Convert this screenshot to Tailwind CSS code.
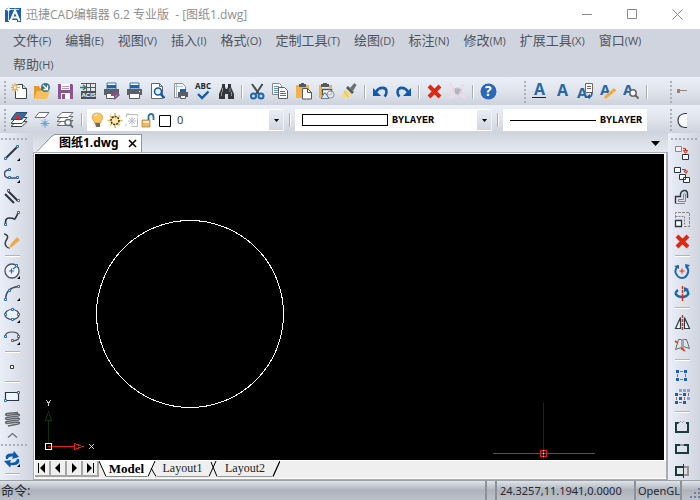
<!DOCTYPE html>
<html lang="zh-CN">
  <head>
    <meta charset="UTF-8" />
    <meta name="viewport" content="width=device-width, initial-scale=1.0" />
    <title>迅捷CAD编辑器</title>
    <script src="https://cdn.jsdelivr.net/npm/@tailwindcss/browser@4"></script>
  </head>
  <body class="flex h-screen flex-col overflow-hidden bg-[#d0d4de] font-['Open_Sans','Noto_Sans_CJK_SC',sans-serif]">
    <!-- Title bar -->
    <header class="flex h-[29px] shrink-0 items-center bg-white pl-[5px] text-[#8f8f8f]">
      <svg class="mr-1 size-[17px]" viewBox="0 0 17 17">
        <path d="M2 2h14v12H0V4z" fill="#1f5fb0" />
        <path d="M0 14h4v2H0zM12 14h4v2h-4z" fill="#1f5fb0" />
        <path d="M5.500 15 10 4.500 14.500 15M7 11.500h6" fill="none" stroke="#fff" stroke-width="2" />
        <path d="M3.500 0v15M0 3.500h14" stroke="#cfe2f7" />
        <path d="M3.500 1l1 1.500 1.500 1-1.500 1-1 1.500-1-1.500-1.500-1 1.500-1z" fill="#fff" />
      </svg>
      <h1 class="grow text-[12px] whitespace-pre">迅捷CAD编辑器 6.2 专业版  - [图纸1.dwg]</h1>
      <div class="flex">
        <button class="flex h-7 w-[45px] items-center justify-center" aria-label="最小化">
          <svg class="size-[11px]" viewBox="0 0 11 11"><path d="M0 5.500h10" stroke="#8a8a8a" /></svg>
        </button>
        <button class="flex h-7 w-[45px] items-center justify-center" aria-label="最大化">
          <svg class="size-[11px]" viewBox="0 0 11 11"><path d="M.5.5h9v9h-9z" fill="none" stroke="#8a8a8a" /></svg>
        </button>
        <button class="flex h-7 w-[45px] items-center justify-center" aria-label="关闭">
          <svg class="size-[11px]" viewBox="0 0 11 11"><path d="M.5.5l10 10M10.500.5l-10 10" stroke="#8a8a8a" /></svg>
        </button>
      </div>
    </header>

    <!-- Menu -->
    <nav class="flex shrink-0 flex-wrap gap-x-[14px] gap-y-[2px] bg-[#d0d4de] px-[13px] pb-[2px] text-[13px] leading-[22px] whitespace-nowrap text-[#4d535d] [&>a]:h-[22px]">
      <a href="#">文件<span class="text-[11px]">(F)</span></a>
      <a href="#">编辑<span class="text-[11px]">(E)</span></a>
      <a href="#">视图<span class="text-[11px]">(V)</span></a>
      <a href="#">插入<span class="text-[11px]">(I)</span></a>
      <a href="#">格式<span class="text-[11px]">(O)</span></a>
      <a href="#">定制工具<span class="text-[11px]">(T)</span></a>
      <a href="#">绘图<span class="text-[11px]">(D)</span></a>
      <a href="#">标注<span class="text-[11px]">(N)</span></a>
      <a href="#">修改<span class="text-[11px]">(M)</span></a>
      <a href="#">扩展工具<span class="text-[11px]">(X)</span></a>
      <a href="#">窗口<span class="text-[11px]">(W)</span></a>
      <a href="#">帮助<span class="text-[11px]">(H)</span></a>
    </nav>

    <!-- Standard toolbar -->
    <div class="flex h-7 shrink-0 overflow-hidden bg-linear-to-b from-[#ebeff8] via-[#e0e4ed] to-[#cdd2dc] pt-px [&_button]:flex [&_button]:w-[23px] [&_button]:shrink-0 [&_button]:items-center [&_button]:justify-center [&_svg]:size-[17px] [&_svg]:overflow-visible">
      <div class="flex w-[520px] shrink-0 items-center">
        <span class="ml-1 mr-[2px] h-[22px] w-[2px] bg-[repeating-linear-gradient(180deg,#a9afbb_0_2px,transparent_2px_4px)]"></span>
        <button aria-label="新建">
          <svg viewBox="0 0 17 17">
            <path d="M5.500 1.500h6l4 4v10h-11v-8" fill="#fff" stroke="#3f4347" />
            <path d="M11.500 1.500v4h4" fill="#ddd" stroke="#3f4347" />
            <path d="M4 0v9M0 4.500h9M1 1.500l6 6M7 1.500l-6 6" stroke="#f0a73a" stroke-width="1.200" />
            <circle cx="4" cy="4.500" r="1.200" fill="#fff" />
          </svg>
        </button>
        <button aria-label="打开">
          <svg viewBox="0 0 17 17">
            <path d="M0 3h5l1 2h6v10H0z" fill="#e39a35" />
            <path d="M3 8h13l-3 8H0z" fill="#f6bf61" />
            <circle cx="11.500" cy="4.500" r="4.500" fill="#3a7186" />
            <path d="M9 2l4 4M13.500 2.500v4h-4" fill="none" stroke="#fff" stroke-width="1.300" />
          </svg>
        </button>
        <button aria-label="保存">
          <svg viewBox="0 0 17 17">
            <path d="M1 1h14l1 1v14H1z" fill="#8a568f" />
            <path d="M4 1h9v6H4zM4 10h9v6H4z" fill="#fff" />
            <path d="M5 3h7v1H5zM5 5h7v1H5z" fill="#b993bb" />
            <path d="M5 11h3v5H5z" fill="#8a568f" />
          </svg>
        </button>
        <button aria-label="导入ACIS">
          <svg viewBox="0 0 17 17">
            <path d="M1 .5h15M6.500 1v7M15.500 1v8M6 4.500h9M10.500 1v7" fill="none" stroke="#55585c" />
            <path d="M0 4.500h5M3 2l3 2.500L3 7" fill="none" stroke="#2f7a6b" stroke-width="1.400" />
            <path d="M1 8h15v8H1z" fill="#4a4d51" />
            <text x="1.500" y="14" font-family="Liberation Sans" font-size="6" font-weight="700" fill="#fff">ACIS</text>
          </svg>
        </button>
        <button aria-label="发布">
          <svg viewBox="0 0 17 17">
            <path d="M4 0h9v6H4z" fill="#fff" stroke="#3974ae" />
            <path d="M4 2h9v3H4z" fill="#1c62ad" />
            <path d="M1 6h15v6H1z" fill="#5b6066" />
            <path d="M3.500 10.500h8v5h-8z" fill="#fff" stroke="#5b6066" />
            <path d="M8 12h5M11 8.500l4.500 3.500-4.500 4" fill="none" stroke="#87528e" stroke-width="2" />
          </svg>
        </button>
        <button aria-label="打印">
          <svg viewBox="0 0 17 17">
            <path d="M4 0h9v6H4z" fill="#fff" stroke="#3974ae" />
            <path d="M4 2h9v3H4z" fill="#1c62ad" />
            <path d="M1 6h15v6H1z" fill="#5b6066" />
            <path d="M3.500 10.500h10v5h-10z" fill="#fff" stroke="#5b6066" />
            <path d="M13 8h1v1h-1z" fill="#fff" />
          </svg>
        </button>
        <button aria-label="打印预览">
          <svg viewBox="0 0 17 17">
            <path d="M2.500.5h8l3 3v12h-11z" fill="#fff" stroke="#63676c" />
            <path d="M10.500.5v3h3" fill="none" stroke="#63676c" />
            <circle cx="9" cy="8.500" r="3.500" fill="#e3effb" stroke="#0f5cab" stroke-width="1.600" />
            <path d="M11.500 11l4 4" stroke="#0f5cab" stroke-width="2.400" />
          </svg>
        </button>
        <button aria-label="页面设置">
          <svg viewBox="0 0 17 17">
            <path d="M2.500.5h8l3 3v11h-11z" fill="#f8fafc" stroke="#8c9097" />
            <path d="M4.500 1v13M2 3.500h9" stroke="#a9bfd4" />
            <path d="M8 6h6v3H8z" fill="#1c62ad" />
            <path d="M6 9h10v5H6z" fill="#5b6066" />
            <path d="M8.500 12.500h5v3h-5z" fill="#fff" stroke="#5b6066" />
          </svg>
        </button>
        <button aria-label="拼写检查">
          <svg viewBox="0 0 17 17">
            <text x="0" y="6" font-family="Open Sans" font-size="8" font-weight="700" fill="#25282c">ABC</text>
            <path d="M3 11l4 4 6.500-6.500" fill="none" stroke="#0f5cab" stroke-width="2.400" />
          </svg>
        </button>
        <button aria-label="查找">
          <svg viewBox="0 0 17 17">
            <path d="M4 1h3v3l1 2h1l1-2V1h3v3l3 7v5h-6v-5H7v5H1v-5l3-7z" fill="#33373b" />
            <path d="M4.500 5v4M3.500 9v4M12 5v4M13.500 9v4" stroke="#8c9196" />
          </svg>
        </button>
        <span class="mx-[3px] h-[14px] w-[2px] border-l border-[#a7adb9] bg-white"></span>
        <button aria-label="剪切">
          <svg viewBox="0 0 17 17">
            <path d="M3 1l7 10M13.500 1L7 11" stroke="#484c51" stroke-width="2" />
            <circle cx="4.500" cy="13" r="2.500" fill="none" stroke="#1d66b5" stroke-width="2" />
            <circle cx="12" cy="13" r="2.500" fill="none" stroke="#1d66b5" stroke-width="2" />
          </svg>
        </button>
        <button aria-label="复制">
          <svg viewBox="0 0 17 17">
            <path d="M.5.5h7l2 2v9h-9z" fill="#fff" stroke="#85898f" />
            <path d="M2 3.500h5M2 5.500h4M2 7.500h4M2 9.500h4" stroke="#5d92c9" />
            <path d="M6.500 4.500h6l3 3v8h-9z" fill="#fff" stroke="#5b6066" />
            <path d="M8 8.500h5M8 10.500h6M8 12.500h6" stroke="#3c7bbd" />
          </svg>
        </button>
        <button aria-label="粘贴">
          <svg viewBox="0 0 17 17">
            <path d="M1 2h13v13H1z" fill="#f2b24a" />
            <path d="M4 1h2V0h3v1h2v3H4z" fill="#55595e" />
            <path d="M7.500 5.500h5l4 4v6.500h-9z" fill="#fff" stroke="#55595e" />
            <path d="M12.500 5.500v4h4" fill="none" stroke="#55595e" />
          </svg>
        </button>
        <button aria-label="粘贴为块">
          <svg viewBox="0 0 17 17">
            <path d="M1 2h3v11h3v2H1zM11 2h3v3h-3z" fill="#f2b24a" />
            <path d="M3 1h2V0h4v1h2v3H3z" fill="#55595e" />
            <path d="M4.500 6.500h9v5h-9z" fill="#fff" stroke="#50555a" stroke-width="1.400" />
            <circle cx="12.500" cy="11.500" r="3.500" fill="#f2f5fa" fill-opacity=".7" stroke="#7b8fa4" />
            <path d="M3 15.500l4-6 4 6z" fill="#dfe8f2" stroke="#6d7d8d" />
          </svg>
        </button>
        <button aria-label="特性匹配">
          <svg viewBox="0 0 17 17">
            <path d="M5 6l6 6-3 3-8-1z" fill="#f3dc86" />
            <path d="M3 8l4 6" stroke="#d4b657" />
            <path d="M5 5l2-2 6 6-2 2z" fill="#55595e" />
            <path d="M9 5l4.500-5 2 2L12 8z" fill="#6b6f73" />
          </svg>
        </button>
        <span class="mx-[3px] h-[14px] w-[2px] border-l border-[#a7adb9] bg-white"></span>
        <button aria-label="撤销">
          <svg viewBox="0 0 17 17">
            <path d="M4 9C7 3.500 14.500 3.500 14.500 9q0 2.500-2 4.500" fill="none" stroke="#0f5aac" stroke-width="2.600" />
            <path d="M1 5v8h8z" fill="#0f5aac" />
          </svg>
        </button>
        <button aria-label="重做">
          <svg viewBox="0 0 17 17">
            <path d="M13 9C10 3.500 2.500 3.500 2.500 9q0 2.500 2 4.500" fill="none" stroke="#0f5aac" stroke-width="2.600" />
            <path d="M16 5v8H8z" fill="#0f5aac" />
          </svg>
        </button>
        <span class="mx-[3px] h-[14px] w-[2px] border-l border-[#a7adb9] bg-white"></span>
        <button aria-label="删除">
          <svg viewBox="0 0 17 17"><path d="M3 3l11 11M14 3L3 14" stroke="#dc2a12" stroke-width="4" /></svg>
        </button>
        <button aria-label="清理">
          <svg viewBox="0 0 17 17">
            <path d="M1 2l4 4M15 1l-4 4M1 15l5-4M16 15l-5-4M2 0v3M0 8h3" stroke="#f3d7ec" stroke-width="2.400" />
            <path d="M4 6l4-2 5 2v4l-4 3-4-3z" fill="#d8d3dd" />
            <path d="M6 5l6 1-3 6-3-2z" fill="#b3b6bd" />
          </svg>
        </button>
        <span class="mx-[3px] h-[14px] w-[2px] border-l border-[#a7adb9] bg-white"></span>
        <button aria-label="帮助">
          <svg viewBox="0 0 17 17">
            <circle cx="8.500" cy="8.500" r="8" fill="#2a68b8" />
            <text x="5" y="13" font-family="Open Sans" font-size="14" font-weight="700" fill="#fff">?</text>
          </svg>
        </button>
      </div>

      <div class="flex w-[146px] shrink-0 items-center">
        <span class="ml-1 mr-[2px] h-[22px] w-[2px] bg-[repeating-linear-gradient(180deg,#a9afbb_0_2px,transparent_2px_4px)]"></span>
        <button aria-label="单行文字">
          <svg viewBox="0 0 17 17">
            <text x="3" y="12" font-family="Open Sans" font-size="16" font-weight="700" fill="#2568a4">A</text>
            <path d="M1 14.500h14" stroke="#222" />
          </svg>
        </button>
        <button aria-label="多行文字">
          <svg viewBox="0 0 17 17"><text x="3" y="13" font-family="Open Sans" font-size="16" font-weight="700" fill="#2568a4">A</text></svg>
        </button>
        <button aria-label="文字样式">
          <svg viewBox="0 0 17 17">
            <text x="0" y="15" font-family="Open Sans" font-size="15" font-weight="700" fill="#2568a4">A</text>
            <path d="M8.500.5h7v9h-7z" fill="#fff" stroke="#7a6860" />
            <path d="M10 3.500h4M10 5.500h4" stroke="#7a6860" />
            <path d="M15 9q0 5-3 5" fill="none" stroke="#1c5ea8" stroke-width="1.600" />
            <path d="M13 11v5l-4-2z" fill="#1c5ea8" />
          </svg>
        </button>
        <button aria-label="编辑文字">
          <svg viewBox="0 0 17 17">
            <text x="0" y="12" font-family="Open Sans" font-size="15" font-weight="700" fill="#2568a4">A</text>
            <path d="M14 5l2.500 2.500L7 15l-3 1 .5-3z" fill="#eda746" stroke="#f4d29e" stroke-width=".6" />
          </svg>
        </button>
        <button aria-label="查找文字">
          <svg viewBox="0 0 17 17">
            <text x="0" y="12" font-family="Open Sans" font-size="15" font-weight="700" fill="#2568a4">A</text>
            <circle cx="10" cy="10" r="3.200" fill="#f7f9fc" stroke="#666" stroke-width="1.500" />
            <path d="M12.500 12.500l3 3" stroke="#666" stroke-width="2" />
          </svg>
        </button>
        <span class="mx-[3px] h-[14px] w-[2px] border-l border-[#a7adb9] bg-white"></span>
      </div>

      <div class="flex shrink-0 items-center">
        <span class="ml-1 mr-[2px] h-[22px] w-[2px] bg-[repeating-linear-gradient(180deg,#a9afbb_0_2px,transparent_2px_4px)]"></span>
        <button aria-label="线型">
          <svg viewBox="0 0 17 17"><path d="M0 6h3v4H0zM3 7h7v1H3z" fill="#9a8377" /></svg>
        </button>
      </div>
    </div>

    <!-- Layer and property toolbar -->
    <div class="flex h-7 shrink-0 items-center overflow-hidden bg-linear-to-b from-[#ebeff8] via-[#e0e4ed] to-[#cdd2dc] pt-[3px] pb-px [&_button]:flex [&_button]:w-[23px] [&_button]:shrink-0 [&_button]:items-center [&_button]:justify-center [&_svg]:h-[17px] [&_svg]:shrink-0">
      <span class="ml-1 mr-[2px] h-[22px] w-[2px] bg-[repeating-linear-gradient(180deg,#a9afbb_0_2px,transparent_2px_4px)]"></span>
      <button aria-label="图层管理">
        <svg class="w-[17px]" viewBox="0 0 17 17">
          <path d="M5 9.500h11l-5 5H0z" fill="#fff" stroke="#3b4149" />
          <path d="M5 5.500h11l-5 6H0z" fill="#fff" stroke="#3b4149" />
          <path d="M5 .5h11l-5 7H0z" fill="#376ba5" stroke="#2f4d70" />
          <path d="M5 4h3v3H5z" fill="#e12a1f" />
        </svg>
      </button>
      <button aria-label="图层状态">
        <svg class="w-[17px]" viewBox="0 0 17 17">
          <path d="M5 .5h10l-4 5H1z" fill="#fff" stroke="#6b6f75" />
          <path d="M11 7v9M6.500 11.500h9M8 8.500l6 6M14 8.500l-6 6" stroke="#69a8d8" />
          <circle cx="11" cy="11.500" r="2" fill="#69a8d8" />
        </svg>
      </button>
      <button aria-label="图层浏览">
        <svg class="w-[17px]" viewBox="0 0 17 17">
          <path d="M5 8.500h11l-5 5H0z" fill="#fff" stroke="#6b6f75" />
          <path d="M5 4.500h11l-5 5H0z" fill="#fff" stroke="#6b6f75" />
          <path d="M5 .5h11l-5 5H0z" fill="#fff" stroke="#6b6f75" />
          <circle cx="11" cy="10.500" r="3" fill="#f5f6f8" stroke="#6b6f75" stroke-width="1.500" />
          <path d="M13 12.500l3 3" stroke="#6b6f75" stroke-width="2" />
        </svg>
      </button>
      <span class="mx-1 h-[14px] w-[2px] border-l border-[#a7adb9] bg-white"></span>

      <div class="flex h-[22px] w-[197px] shrink-0 items-center border-r border-[#eef0f5] bg-white">
        <svg class="ml-[3px] w-[86px]" viewBox="0 0 86 17">
          <path d="M7 1c-4 0-5.500 3-4.500 5.500 1 2 2 3 2 4.500h6c0-1.500 1-2.500 2-4.500C13.500 4 11 1 7 1z" fill="#fbc65c" stroke="#c98d3c" stroke-width=".7" />
          <path d="M4.500 4q1-1.500 3-1.500" fill="none" stroke="#fff2cf" stroke-width="1.500" />
          <path d="M5 11h5v4H6z" fill="#6d6a66" />
          <path d="M25 1v15M17.500 8.500h15M20 3.500l10 10M30 3.500l-10 10" stroke="#f0b83c" stroke-width="1.500" />
          <circle cx="25" cy="8.500" r="4" fill="#ffe6a0" stroke="#3b3320" stroke-width="1.500" stroke-dasharray="2 1" />
          <g stroke="#b7bcc5" fill="none">
            <path d="M36.500 5V2.500h11v2M47.500 6v8.500h-6M42 5v8M38 9h8M39 6l6 6M45 6l-6 6" />
            <path d="M36 2h3M36 12v2" />
          </g>
          <path d="M52 8h8v7h-8z" fill="#e9bb6e" stroke="#a97b35" stroke-width=".7" />
          <path d="M53 9h6v2h-6z" fill="#ffe9b8" />
          <path d="M58.500 8V5q0-3 2.500-3t2.500 3v3" fill="none" stroke="#2d6db5" stroke-width="1.800" />
          <path d="M69.500 3.500h11v11h-11z" fill="#fff" stroke="#000" />
        </svg>
        <select class="min-w-0 grow appearance-none pl-px text-[11px] text-[#333]" aria-label="图层">
          <option>0</option>
        </select>
        <span class="flex h-5 w-[14px] items-center justify-center bg-linear-to-b from-[#e9edf5] to-[#d2d6df]">
          <svg class="w-[5px]" viewBox="0 0 5 17"><path d="M0 7h5L2.500 10z" fill="#000" /></svg>
        </span>
      </div>
      <span class="ml-[5px] mr-1 h-[14px] w-[2px] border-l border-[#a7adb9] bg-white"></span>

      <div class="flex h-[22px] w-[197px] shrink-0 items-center border-r border-[#eef0f5] bg-white">
        <span class="ml-[7px] mr-1 h-3 w-[86px] border border-black"></span>
        <select lang="en" class="min-w-0 grow appearance-none text-[10px] font-bold [font-family:'Liberation_Mono',monospace]" aria-label="颜色">
          <option>BYLAYER</option>
        </select>
        <span class="flex h-5 w-[14px] items-center justify-center bg-linear-to-b from-[#e9edf5] to-[#d2d6df]">
          <svg class="w-[5px]" viewBox="0 0 5 17"><path d="M0 7h5L2.500 10z" fill="#000" /></svg>
        </span>
      </div>
      <span class="ml-[5px] mr-1 h-[14px] w-[2px] border-l border-[#a7adb9] bg-white"></span>

      <div class="flex h-[22px] w-[144px] shrink-0 items-center bg-white">
        <span class="ml-[7px] mr-1 h-px w-[86px] bg-black"></span>
        <select lang="en" class="min-w-0 grow appearance-none text-[10px] font-bold [font-family:'Liberation_Mono',monospace]" aria-label="线型">
          <option>BYLAYER</option>
        </select>
      </div>

      <span class="mr-[2px] ml-[23px] h-[22px] w-[2px] shrink-0 bg-[repeating-linear-gradient(180deg,#a9afbb_0_2px,transparent_2px_4px)]"></span>
      <button aria-label="圆弧">
        <svg class="w-[17px]" viewBox="0 0 17 17">
          <path d="M10 1.500H7q-6 1-6 7t6 7h3z" fill="#f8fafc" />
          <path d="M10 1.500H7.500q-6.500 1-6.500 7t6.500 7H10" fill="none" stroke="#383c42" stroke-width="1.200" />
        </svg>
      </button>
    </div>

    <div class="flex min-h-0 grow">
      <!-- Draw tools -->
      <aside class="flex w-[33px] shrink-0 flex-col overflow-hidden bg-linear-to-r from-[#e9eef8] to-[#d0d5df] pl-px [&>button]:flex [&>button]:h-[22px] [&>button]:w-[23px] [&>button]:shrink-0 [&>button]:justify-center [&>button]:pt-[3px] [&_svg]:size-[17px]">
        <span class="mt-[5px] mb-[2px] h-[2px] w-[26px] shrink-0 bg-[repeating-linear-gradient(90deg,#a9afbb_0_2px,transparent_2px_4px)]"></span>
        <button aria-label="直线">
          <svg viewBox="0 0 17 17">
            <path d="M2 13L13 2" stroke="#2b3644" stroke-width="2" />
            <path d="M.5 12.500h2v2h-2zM12.500.5h2v2h-2z" fill="#fff" stroke="#2a6cc0" />
            <path d="M16 13v3h-3z" fill="#000" />
          </svg>
        </button>
        <button aria-label="多段线">
          <svg viewBox="0 0 17 17">
            <path d="M5 3Q.5 3 .5 7t5 4h8" fill="none" stroke="#454d59" stroke-width="1.400" />
            <path d="M4.500 1.500h2v2h-2zM4.500 9.500h2v2h-2zM12.500 9.500h2v2h-2z" fill="#fff" stroke="#2a6cc0" />
            <path d="M16 13v3h-3z" fill="#000" />
          </svg>
        </button>
        <button aria-label="多线">
          <svg viewBox="0 0 17 17">
            <path d="M1 5l9 9M4 2l10 10" stroke="#2b3644" stroke-width="2" />
            <path d="M3.500.5h2v2h-2zM13.500 10.500h2v2h-2z" fill="#fff" stroke="#2a6cc0" />
          </svg>
        </button>
        <button aria-label="样条曲线">
          <svg viewBox="0 0 17 17">
            <path d="M1.500 13Q1 7 5 7t5 1 4-6" fill="none" stroke="#2b3644" stroke-width="1.700" />
            <path d="M.5 12.500h2v2h-2zM13.500.5h2v2h-2z" fill="#fff" stroke="#2a6cc0" />
          </svg>
        </button>
        <button aria-label="徒手画">
          <svg viewBox="0 0 17 17">
            <path d="M0 1q5 1 3 5-3 4-1 7 1 2 4 2" fill="none" stroke="#3b3f45" stroke-width="1.500" />
            <path d="M13 4l3 3-8 7-3 1 1-3z" fill="#eda746" stroke="#f5cf94" stroke-width=".6" />
          </svg>
        </button>
        <span class="my-[3px] ml-1 h-[2px] w-[15px] shrink-0 border-t border-[#b1b4ba] bg-white"></span>
        <button aria-label="圆">
          <svg viewBox="0 0 17 17">
            <circle cx="8" cy="8" r="7" fill="#eef3fa" stroke="#4b535e" stroke-width="1.300" />
            <path d="M5 8h5M7.500 5.500v5M9 6l4-3" stroke="#2a6cc0" stroke-width="1.200" />
            <path d="M11.500 1.500h2v2h-2z" fill="#fff" stroke="#2a6cc0" />
            <path d="M16 13v3h-3z" fill="#000" />
          </svg>
        </button>
        <button aria-label="圆弧">
          <svg viewBox="0 0 17 17">
            <path d="M1.500 14Q2 3 14 1.500" fill="none" stroke="#454d59" stroke-width="1.300" />
            <path d="M.5 13.500h2v2h-2zM4.500 4.500h2v2h-2zM13.500.5h2v2h-2z" fill="#fff" stroke="#2a6cc0" />
            <path d="M16 13v3h-3z" fill="#000" />
          </svg>
        </button>
        <button aria-label="椭圆">
          <svg viewBox="0 0 17 17">
            <ellipse cx="8" cy="7.500" rx="7" ry="5" fill="#eef3fa" stroke="#454d59" stroke-width="1.200" />
            <path d="M.5 6.500h2v2h-2zM13.500 6.500h2v2h-2zM7.500 1.500h2v2h-2zM7.500 11.500h2v2h-2z" fill="#fff" stroke="#2a6cc0" />
            <path d="M16 13v3h-3z" fill="#000" />
          </svg>
        </button>
        <button aria-label="椭圆弧">
          <svg viewBox="0 0 17 17">
            <path d="M1 7q1-4 7-4t7 4-6 5" fill="none" stroke="#454d59" stroke-width="1.200" />
            <path d="M.5 6.500h2v2h-2zM13.500 6.500h2v2h-2zM7.500 10.500h2v2h-2z" fill="#fff" stroke="#2a6cc0" />
            <path d="M16 13v3h-3z" fill="#000" />
          </svg>
        </button>
        <span class="my-[3px] ml-1 h-[2px] w-[15px] shrink-0 border-t border-[#b1b4ba] bg-white"></span>
        <button aria-label="点">
          <svg viewBox="0 0 17 17"><path d="M6.500 6.500h3v3h-3z" fill="#fff" stroke="#333a44" /></svg>
        </button>
        <span class="my-[3px] ml-1 h-[2px] w-[15px] shrink-0 border-t border-[#b1b4ba] bg-white"></span>
        <button aria-label="矩形">
          <svg viewBox="0 0 17 17">
            <path d="M1.500 3.500h13v8h-13z" fill="#f1f5fb" stroke="#2b3644" stroke-width="1.200" />
            <path d="M.5 10.500h2v2h-2zM13.500 2.500h2v2h-2z" fill="#fff" stroke="#2a6cc0" />
          </svg>
        </button>
        <button aria-label="螺旋">
          <svg viewBox="0 0 17 17">
            <path d="M14 1.500L3 2.500q-3 1 0 2l11-1.500q3 1 0 2L3 6.500q-3 1 0 2l11-1.500q3 1 0 2L3 10.500q-3 1 0 2l11-1.500q3 1 0 2L4 15" fill="none" stroke="#63676d" stroke-width="1.500" />
          </svg>
        </button>
        <svg class="ml-[3px] h-[13px]! shrink-0" viewBox="0 0 17 13"><path d="M4 7.500l4.500-4 4.500 4" fill="none" stroke="#6b7079" stroke-width="1.300" /></svg>
        <span class="mt-px mb-[2px] h-[2px] w-[26px] shrink-0 bg-[repeating-linear-gradient(90deg,#a9afbb_0_2px,transparent_2px_4px)]"></span>
        <button aria-label="重生成">
          <svg viewBox="0 0 17 17">
            <path d="M2 8Q0 2 9 2.500L10 0l5 6-7 2 1-2.500Q4 5 4 8z" fill="#0f5aac" />
            <path d="M15 8q2 7-8 6l-1 2.500L0 10l7-1-1 2.500q6 1 7-3.500z" fill="#0f5aac" />
            <path d="M16 13v3h-3z" fill="#000" />
          </svg>
        </button>
        <span class="my-[3px] ml-1 h-[2px] w-[15px] shrink-0 border-t border-[#b1b4ba] bg-white"></span>
      </aside>

      <!-- Drawing window -->
      <main class="flex min-w-0 grow flex-col bg-[#e4e9f2]">
        <div class="flex h-[19px] shrink-0 items-end bg-linear-to-b from-[#cfd4dd] to-[#e4e9f2] pl-1">
          <svg class="h-[18px] w-[17px]" viewBox="0 0 17 18">
            <path d="M0 18L16 1.500h1V18z" fill="#fff" />
            <path d="M0 17.500L15 2l2-.5" fill="none" stroke="#9298a3" />
          </svg>
          <div class="flex h-[18px] items-center border-t border-r border-[#9298a3] bg-white pb-px pl-[5px] text-black">
            <a href="#" class="font-['Noto_Sans','Noto_Sans_CJK_SC',sans-serif] text-[12px] leading-4 font-bold">图纸1.dwg</a>
            <button class="ml-[6px] flex w-4 justify-center" aria-label="关闭图纸">
              <svg class="size-[9px]" viewBox="0 0 9 9"><path d="M1 1l7 7M8 1L1 8" stroke="#000" stroke-width="1.600" /></svg>
            </button>
          </div>
          <button class="mr-2 mb-[6px] ml-auto" aria-label="图纸列表">
            <svg class="h-[5px] w-[9px]" viewBox="0 0 9 5"><path d="M0 0h9L4.500 5z" fill="#000" /></svg>
          </button>
        </div>

        <div class="flex min-h-0 grow flex-col border-t border-r-2 border-b border-l border-[#a8acb3] bg-white">
          <div class="min-h-0 grow border-t border-r-2 border-l border-white">
            <svg class="block h-full w-full bg-black" shape-rendering="crispEdges">
              <circle cx="155" cy="160" r="93.500" fill="none" stroke="#fff" />
              <path d="M13.500 289v-23M10.500 266l3-8 3 8z" fill="none" stroke="#0b330b" />
              <path d="M13 292.500h26M39.500 289.500l8 3-8 3z" fill="none" stroke="#e3200f" />
              <path d="M10.500 289.500h6v6h-6z" fill="none" stroke="#fff" />
              <path d="M11 246l2.500 3 2.500-3M13.500 249v3" fill="none" stroke="#ccc" />
              <path d="M54 290l5 5M59 290l-5 5" fill="none" stroke="#ccc" />
              <path d="M508.500 249v57" stroke="#0b330b" />
              <path d="M458 299.500h102" stroke="#d3200f" />
              <path d="M505.500 296.500h6v6h-6z" fill="#000" stroke="#e3200f" />
              <path d="M506 299.500h5M508.500 297v5" stroke="#e3200f" />
              <path d="M508 299h1v1h-1zM508 296h1v1h-1zM508 302h1v1h-1z" fill="#ff0" />
            </svg>
          </div>

          <!-- Layout tabs -->
          <div class="mb-px flex h-[18px] shrink-0 items-start border-t border-l border-white bg-[#efefef] pr-1 font-['Liberation_Serif'] text-[12px] leading-[15px] text-[#222]">
            <div class="flex [&_button]:h-4 [&_button]:w-4 [&_button]:border-r-2 [&_button]:border-b-2 [&_button]:border-[#a5a5a5] [&_svg]:size-[14px]">
              <button aria-label="第一个"><svg viewBox="0 0 14 14"><path d="M3 2h1v10H3zM10 2v10L5 7z" /></svg></button>
              <button aria-label="上一个"><svg viewBox="0 0 14 14"><path d="M9 2v10L4 7z" /></svg></button>
              <button aria-label="下一个"><svg viewBox="0 0 14 14"><path d="M5 2v10l5-5z" /></svg></button>
              <button aria-label="最后一个"><svg viewBox="0 0 14 14"><path d="M10 2h1v10h-1zM4 2v10l5-5z" /></svg></button>
            </div>
            <svg class="h-4 w-[7px]" viewBox="0 0 7 16"><path d="M0 0h7v15z" fill="#fff" /><path d="M0 0l7 15.500" stroke="#000" /></svg>
            <button class="h-4 w-[41px] border-b border-[#888] bg-white text-[13px] font-bold text-black">Model</button>
            <svg class="h-4 w-[10px]" viewBox="0 0 10 16"><path d="M0 0h8L1 15.500H0z" fill="#fff" /><path d="M8 0L1 15.500M4 7l5 8.500" fill="none" stroke="#000" /></svg>
            <button class="h-4 w-[51px] border-b border-[#999]">Layout1</button>
            <svg class="h-4 w-[10px]" viewBox="0 0 10 16"><path d="M8 0L1 15.500M3 1l6 14.500" fill="none" stroke="#000" /></svg>
            <button class="h-4 w-[54px] border-b border-[#999]">Layout2</button>
            <svg class="h-4 w-2" viewBox="0 0 8 16"><path d="M8 0L1 15.500" stroke="#000" stroke-width="1.300" /></svg>
          </div>
        </div>
      </main>

      <!-- Modify tools -->
      <aside class="flex w-8 shrink-0 flex-col overflow-hidden bg-linear-to-r from-[#e9eef8] to-[#d0d5df] pl-[3px] [&>button]:flex [&>button]:h-[22px] [&>button]:w-[23px] [&>button]:shrink-0 [&>button]:justify-center [&>button]:pt-[3px] [&_svg]:size-[17px]">
        <span class="mt-[5px] mb-[2px] h-[2px] w-[26px] shrink-0 bg-[repeating-linear-gradient(90deg,#a9afbb_0_2px,transparent_2px_4px)]"></span>
        <button aria-label="复制对象">
          <svg viewBox="0 0 17 17">
            <path d="M1.500 1.500h6v5h-6z" fill="#f1f1f1" stroke="#8a8784" />
            <path d="M8.500 9.500h6v5h-6z" fill="#fff" stroke="#26354a" />
            <path d="M9 3.500h2.500V6M9.500 5.500h4l-2 3z" fill="none" stroke="#dc2a12" />
          </svg>
        </button>
        <button aria-label="多重复制">
          <svg viewBox="0 0 17 17">
            <path d="M.5.5h6v5h-6zM5.500 7.500h6v5h-6zM9.500 10.500h6v5h-6z" fill="#fff" stroke="#26354a" />
            <path d="M8 2.500h3.500V4M10 4h3.500l-1.500 2.500z" fill="none" stroke="#dc2a12" />
          </svg>
        </button>
        <button aria-label="偏移">
          <svg viewBox="0 0 17 17">
            <path d="M1.500 14.500v-7h5V5q1-3.500 4-3.500t3 3.500v4" fill="none" stroke="#2b3644" stroke-width="1.400" />
            <path d="M4.500 12.500v-2h5V5q1-1.500 2 0v7.500z" fill="none" stroke="#83878c" />
            <path d="M2 14.500h9" stroke="#83878c" />
          </svg>
        </button>
        <button aria-label="缩放">
          <svg viewBox="0 0 17 17">
            <path d="M1.500 7v-5.500h14v14H9" fill="none" stroke="#8a8784" stroke-dasharray="3 1" />
            <path d="M1.500 5.500h9v9" fill="none" stroke="#8a8784" stroke-dasharray="2 1" />
            <path d="M1.500 9.500h6v6h-6z" fill="#fff" stroke="#26354a" stroke-width="1.300" />
          </svg>
        </button>
        <button aria-label="删除对象">
          <svg viewBox="0 0 17 17"><path d="M3 3l11 11M14 3L3 14" stroke="#dc2a12" stroke-width="4" /></svg>
        </button>
        <span class="my-[3px] ml-1 h-[2px] w-[15px] shrink-0 border-t border-[#b1b4ba] bg-white"></span>
        <button aria-label="旋转">
          <svg viewBox="0 0 17 17">
            <path d="M4 3Q.8 6 1.500 9.500q2 5.500 6.500 5.500t6-5.500Q15 6 12 3" fill="none" stroke="#1d67ad" stroke-width="2" />
            <path d="M0 3l5-1v4zM11 1l5 1-4 4z" fill="#1d67ad" />
            <path d="M8 5.500v5M5.500 8h5" stroke="#dc2a12" />
          </svg>
        </button>
        <button aria-label="三维旋转">
          <svg viewBox="0 0 17 17">
            <path d="M4 5Q1 7 2 9.500q2 2.500 6 2.500t6-2.500q1-3-2-4.500" fill="none" stroke="#1d67ad" stroke-width="2.400" />
            <path d="M10 2v5l5-3z" fill="#1d67ad" />
            <path d="M8.500 1v15" stroke="#dc2a12" stroke-width="1.400" stroke-dasharray="3 1" />
          </svg>
        </button>
        <span class="my-[3px] ml-1 h-[2px] w-[15px] shrink-0 border-t border-[#b1b4ba] bg-white"></span>
        <button aria-label="镜像">
          <svg viewBox="0 0 17 17">
            <path d="M6.500 2.500v11h-5zM10.500 2.500v11h5z" fill="#f2f5f9" stroke="#2b3f47" stroke-width="1.200" />
            <path d="M8.500 0v16" stroke="#dc2a12" stroke-width="1.400" stroke-dasharray="3 1" />
          </svg>
        </button>
        <button aria-label="三维镜像">
          <svg viewBox="0 0 17 17">
            <path d="M4.500 2.500h3v8l-6 2zM9.500 2.500h3l3 9-6-2z" fill="#dfe5e7" stroke="#5f6d72" />
            <path d="M7 2h3v11H7z" fill="#9ba6aa" />
            <path d="M1 4l3 2M7 11l4 3" stroke="#dc4a22" stroke-width="2" />
          </svg>
        </button>
        <span class="my-[3px] ml-1 h-[2px] w-[15px] shrink-0 border-t border-[#b1b4ba] bg-white"></span>
        <button aria-label="阵列">
          <svg viewBox="0 0 17 17">
            <path d="M2 3h3v3H2zM10 3h3v3h-3zM2 11h3v3H2zM10 11h3v3h-3z" fill="#1a5fb4" />
            <path d="M6 4.500h3M6 12.500h3M3.500 7v3M11.500 7v3" stroke="#8a7369" />
          </svg>
        </button>
        <button aria-label="三维阵列">
          <svg viewBox="0 0 17 17">
            <path d="M5 0h3v3H5zM13 0h3v3h-3zM13 8h3v3h-3zM9 0h3v3H9z" fill="#7ba9d8" />
            <path d="M1 4h3v3H1zM9 4h3v3H9zM1 12h3v3H1zM9 12h3v3H9zM5 8h3v3H5z" fill="#1a5fb4" />
            <path d="M5 5.500h3M5 13.500h3M2.500 8v3M10.500 8v3M14.500 4v3" stroke="#8a7369" />
          </svg>
        </button>
        <span class="my-[3px] ml-1 h-[2px] w-[15px] shrink-0 border-t border-[#b1b4ba] bg-white"></span>
        <button aria-label="打断">
          <svg viewBox="0 0 17 17">
            <path d="M5 4H2v9h12V4h-2" fill="none" stroke="#1c3b3d" stroke-width="2" />
            <path d="M4 5l3-3M8 4l2-2" stroke="#999" />
          </svg>
        </button>
        <button aria-label="合并">
          <svg viewBox="0 0 17 17">
            <path d="M6 4H2v8h12V4h-4" fill="none" stroke="#1c3b3d" stroke-width="2" />
            <path d="M6 4h4" stroke="#999" stroke-width="2" />
          </svg>
        </button>
        <button aria-label="修剪">
          <svg viewBox="0 0 17 17">
            <path d="M9 4H2v8h7" fill="none" stroke="#1c3b3d" stroke-width="2" />
            <path d="M9 4h5v8H9" fill="none" stroke="#98938f" stroke-width="2" />
            <path d="M9.500 1v14" stroke="#1c3b3d" />
          </svg>
        </button>
      </aside>
    </div>

    <!-- Status bar -->
    <footer class="flex h-5 shrink-0 items-stretch overflow-hidden border-t border-[#9a9fa8] bg-linear-to-b from-[#dfe3ea] via-[#adb2bc] to-[#bcc1ca] font-['Noto_Sans','Noto_Sans_CJK_SC',sans-serif] text-[11px] leading-[19px] text-[#262a30]">
      <label for="command" class="pl-px text-[13px]">命令:</label>
      <input id="command" type="text" class="min-w-0 grow px-1 outline-none" />
      <span class="w-[10px] border-l-2 border-[#8d9199]"></span>
      <span class="w-[139px] border-l-2 border-[#8d9199] pl-[3px]">24.3257,11.1941,0.0000</span>
      <span class="w-12 border-x-2 border-[#8d9199] pl-[2px]">OpenGL</span>
      <svg class="ml-1 h-[19px] w-[14px]" viewBox="0 0 14 19">
        <path d="M12 7h2v2h-2zM8 11h2v2H8zM12 11h2v2h-2zM4 15h2v2H4zM8 15h2v2H8zM12 15h2v2h-2z" fill="#6f7f9c" />
      </svg>
    </footer>
  </body>
</html>
